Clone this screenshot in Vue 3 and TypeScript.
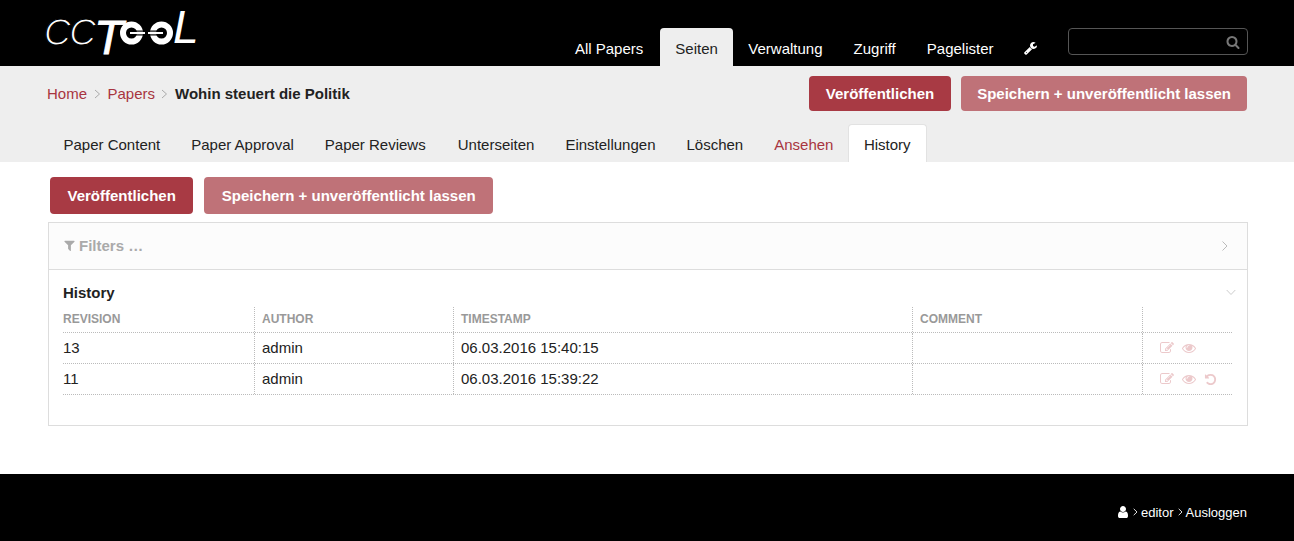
<script setup lang="ts">
const P = {
  wrench: 'M384 1344q0-26-19-45t-45-19-45 19-19 45 19 45 45 19 45-19 19-45zm644-420l-682 682q-37 37-90 37-52 0-91-37l-106-108q-38-36-38-90 0-53 38-91l681-681q39 98 114.5 173.5t173.5 114.5zm634-435q0 39-23 106-47 134-164.5 217.5t-258.5 83.5q-185 0-316.5-131.5t-131.5-316.5 131.5-316.5 316.5-131.5q58 0 121.5 16.5t107.5 46.5q16 11 16 28t-16 28l-293 169v224l193 107q5-3 79-48.5t135.5-81 70.5-35.5q15 0 23.5 10t8.5 25z',
  search: 'M1216 832q0-185-131.5-316.5t-316.5-131.5-316.5 131.5-131.5 316.5 131.5 316.5 316.5 131.5 316.5-131.5 131.5-316.5zm512 832q0 52-38 90t-90 38q-54 0-90-38l-343-342q-179 124-399 124-143 0-273.5-55.5t-225-150-150-225-55.5-273.5 55.5-273.5 150-225 225-150 273.5-55.5 273.5 55.5 225 150 150 225 55.5 273.5q0 220-124 399l343 343q37 37 37 90z',
  filter: 'M1595 295q17 41-14 70l-493 493v742q0 42-39 59-13 5-25 5-27 0-45-19l-256-256q-19-19-19-45v-486l-493-493q-31-29-14-70 17-39 59-39h1280q42 0 59 39z',
  user: 'M1536 1399q0 109-62.5 187t-150.5 78h-854q-88 0-150.5-78t-62.5-187q0-85 8.5-160.5t31.5-152 58.5-131 94-89 134.5-34.5q131 128 313 128t313-128q76 0 134.5 34.5t94 89 58.5 131 31.5 152 8.5 160.5zm-256-887q0 159-112.5 271.5t-271.5 112.5-271.5-112.5-112.5-271.5 112.5-271.5 271.5-112.5 271.5 112.5 112.5 271.5z',
  eye: 'M1664 960q-152-236-381-353 61 104 61 225 0 185-131.5 316.5t-316.5 131.5-316.5-131.5-131.5-316.5q0-121 61-225-229 117-381 353 133 205 333.5 326.5t434.5 121.5 434.5-121.5 333.5-326.5zm-720-384q0-20-14-34t-34-14q-125 0-214.5 89.5t-89.5 214.5q0 20 14 34t34 14 34-14 14-34q0-86 61-147t147-61q20 0 34-14t14-34zm848 384q0 34-20 69-140 230-376.5 368.5t-499.5 138.5-499.5-139-376.5-368q-20-35-20-69t20-69q140-229 376.5-368t499.5-139 499.5 139 376.5 368q20 35 20 69z',
  undo: 'M1664 896q0 156-61 298t-164 245-245 164-298 61q-172 0-327-72.5t-264-204.5q-7-10-6.5-22.5t8.5-20.5l137-138q10-9 25-9 16 2 23 12 73 95 179 147t225 52q104 0 198.5-40.5t163.5-109.5 109.5-163.5 40.5-198.5-40.5-198.5-109.5-163.5-163.5-109.5-198.5-40.5q-98 0-188 35.5t-160 101.5l137 138q31 30 14 69-17 40-59 40h-448q-26 0-45-19t-19-45v-448q0-42 40-59 39-17 69 14l130 129q107-101 244.5-156.5t284.5-55.5q156 0 298 61t245 164 164 245 61 298z',
  edit: 'M888 1184l116-116-152-152-116 116v56h96v96h56zm440-720q-16-16-33 1l-350 350q-17 17-1 33t33-1l350-350q17-17 1-33zm80 594v190q0 119-84.5 203.5t-203.5 84.5h-832q-119 0-203.5-84.5t-84.5-203.5v-832q0-119 84.5-203.5t203.5-84.5h832q63 0 117 25 15 7 18 23 3 17-9 29l-49 49q-14 14-32 8-23-6-45-6h-832q-66 0-113 47t-47 113v832q0 66 47 113t113 47h832q66 0 113-47t47-113v-126q0-13 9-22l64-64q15-15 35-7t20 29zm-96-738l288 288-672 672h-288v-288zm444 132l-92 92-288-288 92-92q28-28 68-28t68 28l152 152q28 28 28 68t-28 68z',
}
const topNav = ['All Papers', 'Seiten', 'Verwaltung', 'Zugriff', 'Pagelister']
const subTabs = ['Paper Content', 'Paper Approval', 'Paper Reviews', 'Unterseiten', 'Einstellungen', 'Löschen', 'Ansehen', 'History']
const rows = [
  { rev: '13', author: 'admin', time: '06.03.2016 15:40:15', undo: false },
  { rev: '11', author: 'admin', time: '06.03.2016 15:39:22', undo: true },
]
</script>

<template>
  <div class="page">
    <header class="top">
      <svg class="logo" width="160" height="66" viewBox="0 0 160 66">
        <text class="cc" x="0" y="44.500">CC</text>
        <text class="t" x="50" y="54">T</text>
        <g class="chain">
          <circle cx="87.500" cy="33" r="8.500" />
          <circle cx="117.500" cy="33" r="8.500" />
          <rect class="gap" x="92" y="30.500" width="21" height="1.200" />
          <rect class="gap" x="92" y="34.300" width="21" height="1.200" />
          <path d="M86 33h15M104 33h15" />
        </g>
        <text class="l" x="129" y="43">L</text>
      </svg>
      <nav class="topnav">
        <a v-for="n in topNav" :key="n" class="toplink" :class="{ active: n === 'Seiten' }">{{ n }}</a>
        <a class="toplink tool"><svg width="14" height="14" viewBox="0 0 1792 1792"><path :d="P.wrench" fill="#fff" /></svg></a>
      </nav>
      <div class="search">
        <svg width="14" height="14" viewBox="0 0 1792 1792"><path :d="P.search" fill="#777" /></svg>
      </div>
    </header>

    <section class="sub">
      <div class="subrow">
        <div class="crumbs">
          <a>Home</a>
          <svg class="cv" width="7" height="10" viewBox="0 0 7 10"><path d="M1 1l4.500 4-4.500 4" fill="none" stroke="#aaa" /></svg>
          <a>Papers</a>
          <svg class="cv" width="7" height="10" viewBox="0 0 7 10"><path d="M1 1l4.500 4-4.500 4" fill="none" stroke="#aaa" /></svg>
          <b>Wohin steuert die Politik</b>
        </div>
        <div class="btns">
          <button class="btn primary">Veröffentlichen</button>
          <button class="btn light">Speichern + unveröffentlicht lassen</button>
        </div>
      </div>
      <div class="tabs">
        <a v-for="t in subTabs" :key="t" class="tab" :class="{ on: t === 'History', red: t === 'Ansehen' }">{{ t }}</a>
      </div>
    </section>

    <main class="main">
      <div class="btns mainbtns">
        <button class="btn primary">Veröffentlichen</button>
        <button class="btn light">Speichern + unveröffentlicht lassen</button>
      </div>
      <div class="panel">
        <div class="filters">
          <span class="ftitle"><svg width="13" height="13" viewBox="0 0 1792 1792"><path :d="P.filter" fill="#aaa" /></svg>Filters …</span>
          <svg width="8" height="12" viewBox="0 0 8 12"><path d="M1.500 1.500 6 6l-4.500 4.500" fill="none" stroke="#bbb" /></svg>
        </div>
        <div class="hist">
          <div class="htitle">
            <b>History</b>
            <svg width="10" height="7" viewBox="0 0 10 7"><path d="M.7 1 5 5.500 9.300 1" fill="none" stroke="#ccc" /></svg>
          </div>
          <div class="grid ghead">
            <div>REVISION</div><div>AUTHOR</div><div>TIMESTAMP</div><div>COMMENT</div><div></div>
          </div>
          <div v-for="r in rows" :key="r.rev" class="grid grow">
            <div>{{ r.rev }}</div><div>{{ r.author }}</div><div>{{ r.time }}</div><div></div>
            <div class="acts">
              <svg width="14" height="14" viewBox="0 0 1792 1792"><path :d="P.edit" /></svg>
              <svg width="14" height="14" viewBox="0 0 1792 1792"><path :d="P.eye" /></svg>
              <svg v-if="r.undo" width="13" height="13" viewBox="0 0 1792 1792"><path :d="P.undo" /></svg>
            </div>
          </div>
        </div>
      </div>
    </main>

    <footer class="foot">
      <svg width="14" height="14" viewBox="0 0 1792 1792"><path :d="P.user" fill="#fff" /></svg>
      <svg width="5" height="8" viewBox="0 0 5 8"><path d="M.7.8 4 4 .7 7.200" fill="none" stroke="#ddd" /></svg>
      <span class="fed">editor</span>
      <svg width="5" height="8" viewBox="0 0 5 8"><path d="M.7.8 4 4 .7 7.200" fill="none" stroke="#ddd" /></svg>
      <span>Ausloggen</span>
    </footer>
  </div>
</template>

<style>
html, body { margin: 0; background: #fff; }
</style>

<style scoped>
.page { font-family: "Liberation Sans", Arial, sans-serif; font-size: 15px; color: #222; width: 1294px; height: 541px; display: flex; flex-direction: column; overflow: hidden; }
.top { background: #000; height: 66px; flex: none; display: flex; align-items: flex-end; padding: 0 46px 0 44px; box-sizing: border-box; }
.logo { align-self: flex-start; flex: none; }
.cc { font: italic 400 37px "Liberation Sans", sans-serif; letter-spacing: -1.500px; fill: #fff; stroke: #000; stroke-width: 1.200px; }
.t { font: italic 400 48px "Liberation Sans", sans-serif; fill: #fff; stroke: #fff; stroke-width: .8px; }
.l { font: italic 400 46px "Liberation Sans", sans-serif; fill: #fff; }
.chain { fill: none; stroke: #fff; stroke-width: 6; }
.chain .gap { fill: #000; stroke: none; }
.chain path { stroke-width: 2; }
.topnav { display: flex; margin-left: auto; height: 38px; }
.toplink { color: #fff; padding: 0 15.500px; line-height: 41px; border-radius: 4px 4px 0 0; white-space: nowrap; }
.toplink:first-child { padding-right: 17px; }
.toplink.active { background: #eee; color: #222; padding: 0 15px 0 15px; }
.toplink.tool { padding: 0 14px 0 15px; }
.toplink.tool svg { vertical-align: -2px; }
.search { width: 180px; height: 27px; margin: 0 0 11px 16px; box-sizing: border-box; border: 1px solid #555; border-radius: 4px; display: flex; align-items: center; justify-content: flex-end; padding-right: 7px; }
.sub { background: #eee; height: 96px; flex: none; display: flex; flex-direction: column; }
.subrow { display: flex; align-items: flex-start; justify-content: space-between; padding: 10px 47px 0 47px; height: 58px; box-sizing: border-box; }
.crumbs { display: flex; align-items: center; height: 35px; white-space: nowrap; }
.crumbs a { color: #a8353f; }
.crumbs .cv { margin: 0 6.500px 0 7px; }
.crumbs .cv:nth-of-type(2) { margin-right: 7px; margin-left: 6px; }
.crumbs b { color: #222; }
.btns { display: flex; gap: 10px; }
.btn { font: bold 15px "Liberation Sans", Arial, sans-serif; color: #fff; border: 0; height: 35px; padding: 0 17px; border-radius: 4px; white-space: nowrap; }
.primary { background: #a83a44; }
.light { background: #bf7278; padding: 0 16px; }
.tabs { display: flex; padding-left: 48px; height: 38px; }
.tab { padding: 0 15.500px; line-height: 41px; white-space: nowrap; border-radius: 4px 4px 0 0; }
.tab:nth-child(3) { padding-right: 16.500px; }
.tab.red { color: #a8353f; padding-right: 14.500px; }
.tab.on { background: #fff; border: 1px solid #e2e2e2; border-bottom: 0; line-height: 39px; padding: 0 15px; }
.main { flex: 1; padding: 15px 46px 0 48px; }
.mainbtns { padding-left: 2px; gap: 11px; }
.mainbtns .btn { height: 37px; }
.mainbtns .primary { padding: 0 17.500px; }
.mainbtns .light { padding: 0 17.500px; }
.panel { margin-top: 8px; height: 204px; box-sizing: border-box; border: 1px solid #ddd; }
.filters { height: 46px; box-sizing: content-box; background: #fcfcfc; border-bottom: 1px solid #ddd; display: flex; align-items: center; justify-content: space-between; padding: 0 18px 0 14px; }
.ftitle { display: flex; align-items: center; gap: 3px; color: #aaa; font-weight: bold; font-size: 15px; margin-bottom: 1px; }
.hist { padding: 13px 15px 0 14px; }
.htitle { display: flex; justify-content: space-between; align-items: center; height: 19px; }
.htitle svg { margin-right: -4px; }
.grid { display: grid; grid-template-columns: 191px 199px 459px 230px 90px; }
.grid > div { padding-left: 7px; border-left: 1px dotted #bbb; box-sizing: border-box; }
.grid > div:first-child { padding-left: 0; border-left: 0; }
.ghead { height: 26px; font-size: 12px; font-weight: bold; color: #999; line-height: 24px; border-bottom: 1px dotted #bbb; margin-top: 5px; box-sizing: border-box; }
.grow { height: 31px; line-height: 30px; font-size: 15px; border-bottom: 1px dotted #bbb; box-sizing: border-box; }
.acts { display: flex; align-items: center; gap: 8px; padding-left: 17px !important; }
.acts svg { fill: #ecc9cb; }
.foot { height: 67px; background: #000; flex: none; display: flex; align-items: center; justify-content: flex-end; padding: 9px 47px 0 0; box-sizing: border-box; color: #fff; font-size: 13px; gap: 3px; }
.fed { margin-right: 1px; }
</style>
